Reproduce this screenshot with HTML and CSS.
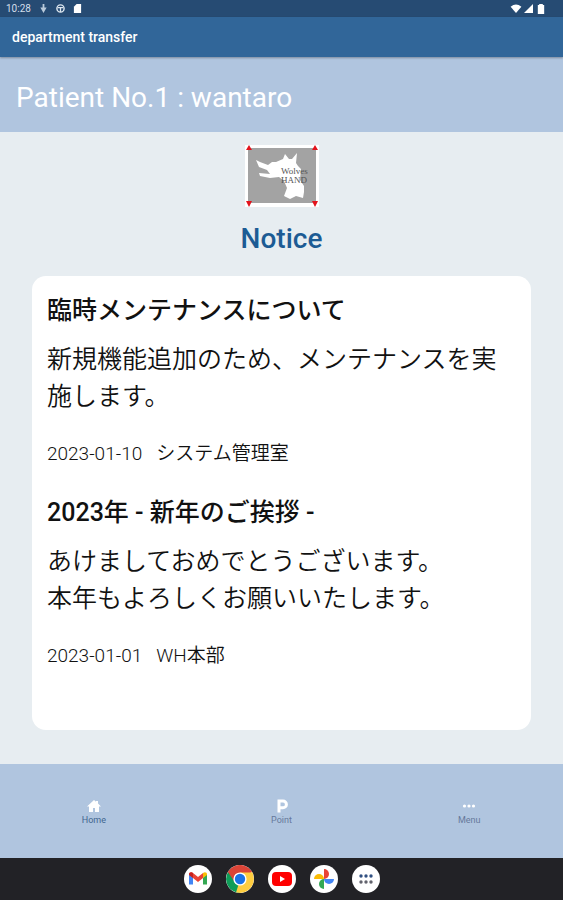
FILE: index.html
```html
<!doctype html>
<html lang="ja">
  <head>
    <meta charset="UTF-8" />
    <meta name="viewport" content="width=device-width, initial-scale=1.0" />
    <title>department transfer</title>
    <link rel="stylesheet" href="styles.css">
  </head>
  <body>
    <div class="status-bar">
      <span class="status-time">10:28</span>
      <svg class="status-icon" viewBox="0 0 10 10"><path d="M4 0h2v4h2.500L5 10 1.500 4H4z" fill="#b9cadb"/></svg>
      <svg class="status-icon status-icon-app" viewBox="0 0 10 10"><circle cx="5" cy="5" r="4" fill="none" stroke="#dce6ef" stroke-width="1.6"/><path d="M2 4h6M5 4v5" stroke="#dce6ef" stroke-width="1.4"/></svg>
      <svg class="status-icon" viewBox="0 0 10 10"><path d="M4 0h5v10H1V3z" fill="#fff"/></svg>
      <div class="status-right">
        <svg class="status-wifi" viewBox="0 0 12 10"><path d="M0 3Q6-2 12 3L6 10z" fill="#fff"/></svg>
        <svg class="status-icon" viewBox="0 0 10 10"><path d="M10 0v10H0z" fill="#fff"/></svg>
        <svg class="status-battery" viewBox="0 0 8 11"><path d="M2 0h4v1h1.500v10h-7V1H2z" fill="#fff"/></svg>
      </div>
    </div>

    <header class="app-bar">department transfer</header>
    <div class="patient">Patient No.1 : wantaro</div>

    <main class="content">
      <svg class="logo" viewBox="0 0 74 62" role="img" aria-label="Wolves Hand">
        <rect width="74" height="62" fill="#fff"/>
        <rect x="3" y="3" width="68" height="55" fill="#a3a3a3"/>
        <path d="M11 15L15 17 23 20 27 17 31 17 38 14 40 9 44 14 47 14 52 8 51 18 53 21 56 24 55 35 59 41 59 47 58 53 51 51 45 54 39 51 42 43 39 36 34 32 25 33 15 31 14 28 25 29 22 25 14 22z" fill="#fff"/>
        <text class="logo-text" x="36" y="29">Wolves</text>
        <text class="logo-text" x="36" y="38">HAND</text>
        <path d="M1 5l3-5 3 5zM67 5l3-5 3 5zM1 56h6l-3 6zM67 56h6l-3 6z" fill="#e3131c"/>
      </svg>
      <h1 class="notice-title">Notice</h1>

      <div class="notice-card">
        <article class="notice">
          <h2 class="notice-heading">臨時メンテナンスについて</h2>
          <p class="notice-body">新規機能追加のため、メンテナンスを実施します。</p>
          <p class="notice-meta"><time>2023-01-10</time><span>システム管理室</span></p>
        </article>
        <article class="notice">
          <h2 class="notice-heading">2023年 - 新年のご挨拶 -</h2>
          <p class="notice-body">あけましておめでとうございます。<br />本年もよろしくお願いいたします。</p>
          <p class="notice-meta"><time>2023-01-01</time><span>WH本部</span></p>
        </article>
      </div>
    </main>

    <nav class="tab-bar">
      <a class="tab tab-active" href="#home">
        <svg class="tab-icon" viewBox="0 0 16 16"><path d="M8 2L1 8.500h2V14h4v-4h2v4h4V8.500h2L12 5.600V3h-2v.8z" fill="#fff"/></svg>
        Home
      </a>
      <a class="tab" href="#point">
        <svg class="tab-icon" viewBox="0 0 16 16"><path d="M5 14.500V3h4a3.300 3.300 0 0 1 0 6.800H5" fill="none" stroke="#fff" stroke-width="3"/></svg>
        Point
      </a>
      <a class="tab" href="#menu">
        <svg class="tab-icon" viewBox="0 0 16 16"><circle cx="3.500" cy="8" r="1.600" fill="#fff"/><circle cx="8" cy="8" r="1.600" fill="#fff"/><circle cx="12.500" cy="8" r="1.600" fill="#fff"/></svg>
        Menu
      </a>
    </nav>

    <div class="dock">
      <button class="dock-app" type="button" aria-label="Gmail">
        <svg viewBox="0 0 28 28"><path d="M5 9v10.500h4V12.500L5 9z" fill="#4285f4"/><path d="M23 9v10.500h-4V12.500L23 9z" fill="#34a853"/><path d="M5 9.500C5 7 8 6.500 9 8l5 4 5-4v5l-5 4-5-4z" fill="#ea4335"/><path d="M5 9.500C5 7.500 7 6.500 9 8v5l-4-3z" fill="#c5221f"/><path d="M23 9.500C23 7.500 21 6.500 19 8v5l4-3z" fill="#fbbc04"/></svg>
      </button>
      <button class="dock-app" type="button" aria-label="Chrome">
        <svg viewBox="0 0 28 28"><path d="M14 14L1.900 7A14 14 0 0 1 26.100 7z" fill="#db4437"/><path d="M14 14L26.100 7A14 14 0 0 1 14 28z" fill="#ffcd40"/><path d="M14 14V28A14 14 0 0 1 1.900 7z" fill="#0f9d58"/><path d="M14 7.500H26.300L27 9.500 20 16z" fill="#ffcd40"/><path d="M19.800 17L14 28 10 27.400 13 18z" fill="#ffcd40"/><path d="M1.900 7L8 17l3-7z" fill="#0f9d58"/><path d="M14 7h12.100A14 14 0 0 0 1.900 7L8 16z" fill="#db4437"/><circle cx="14" cy="14" r="6.600" fill="#fff"/><circle cx="14" cy="14" r="5.200" fill="#1a73e8"/></svg>
      </button>
      <button class="dock-app" type="button" aria-label="YouTube">
        <svg viewBox="0 0 28 28"><rect x="4" y="7" width="20" height="14" rx="4" fill="#f00"/><path d="M12 11v6l5-3z" fill="#fff"/></svg>
      </button>
      <button class="dock-app" type="button" aria-label="Photos">
        <svg viewBox="0 0 28 28"><path d="M14 14V4a5 5 0 0 1 0 10z" fill="#ea4335"/><path d="M14 14h10a5 5 0 0 1-10 0z" fill="#4285f4"/><path d="M14 14v10a5 5 0 0 1 0-10z" fill="#34a853"/><path d="M14 14H4a5 5 0 0 1 10 0z" fill="#fbbc04"/></svg>
      </button>
      <button class="dock-app" type="button" aria-label="All apps">
        <svg viewBox="0 0 28 28"><g fill="#315082"><circle cx="9" cy="11" r="1.700"/><circle cx="14" cy="11" r="1.700"/><circle cx="19" cy="11" r="1.700"/></g><g fill="#62636d"><circle cx="9" cy="17" r="1.700"/><circle cx="14" cy="17" r="1.700"/><circle cx="19" cy="17" r="1.700"/></g></svg>
      </button>
    </div>
  </body>
</html>
```
FILE: styles.css
```css
* {
  box-sizing: border-box;
}

body {
  margin: 0;
  min-height: 100vh;
  display: flex;
  flex-direction: column;
  background: #e7edf1;
  color: #111;
  font-family: Roboto, 'Noto Sans CJK JP', sans-serif;
}

/* ステータスバー */
.status-bar {
  display: flex;
  align-items: center;
  gap: 8px;
  height: 17px;
  padding: 0 18px 0 6px;
  background: #264b73;
}

.status-time {
  color: #d3deea;
  font-size: 10px;
  line-height: 17px;
}

.status-icon {
  width: 9px;
  height: 9px;
}

.status-right {
  display: flex;
  align-items: center;
  gap: 2px;
  margin-left: auto;
}

.status-wifi {
  width: 12px;
  height: 9px;
}

.status-battery {
  width: 8px;
  height: 10px;
  margin-left: 2px;
}

.app-bar {
  position: relative;
  padding: 0 12px;
  background: #316699;
  box-shadow: 0 1px 2px rgba(0, 0, 0, 0.3);
  color: #fff;
  font-size: 14px;
  font-weight: 500;
  line-height: 40px;
}

.patient {
  height: 75px;
  padding: 0 16px;
  background: #b0c5df;
  color: #fff;
  font-size: 28px;
  line-height: 82px;
}

/* お知らせ */
.content {
  flex: 1;
  display: flex;
  flex-direction: column;
  align-items: center;
  padding: 13px 32px 34px;
}

.logo {
  width: 74px;
  height: 62px;
}

.logo-text {
  fill: #555;
  font-family: 'Liberation Serif', serif;
  font-size: 9px;
}

.notice-title {
  margin: 13px 0 19px;
  color: #1c5b94;
  font-size: 28px;
  font-weight: 500;
  line-height: 37px;
}

.notice-card {
  flex: 1;
  align-self: stretch;
  padding: 16px 15px 0;
  background: #fff;
  border-radius: 14px;
}

.notice {
  margin-bottom: 26px;
}

.notice-heading {
  margin: 0 0 12px;
  font-size: 25px;
  font-weight: 500;
  line-height: 37px;
}

.notice-body {
  margin: 0 0 25px;
  font-size: 25px;
  font-weight: 350;
  line-height: 37px;
}

.notice-meta {
  display: flex;
  gap: 14px;
  margin: 0;
  font-size: 19px;
  font-weight: 350;
  line-height: 28px;
}

/* 下部タブ */
.tab-bar {
  display: flex;
  height: 94px;
  background: #b0c5df;
}

.tab {
  flex: 1;
  display: flex;
  flex-direction: column;
  align-items: center;
  justify-content: center;
  padding-top: 1px;
  color: #66799b;
  font-size: 9px;
  line-height: 12px;
  text-decoration: none;
}

.tab-active {
  color: #42658f;
}

.tab-icon {
  width: 16px;
  height: 16px;
}

.dock {
  display: flex;
  align-items: center;
  justify-content: center;
  gap: 14px;
  height: 42px;
  background: #222226;
}

.dock-app {
  width: 28px;
  height: 28px;
  padding: 0;
  overflow: hidden;
  background: #fff;
  border: 0;
  border-radius: 50%;
}

.dock-app svg {
  display: block;
}
```
